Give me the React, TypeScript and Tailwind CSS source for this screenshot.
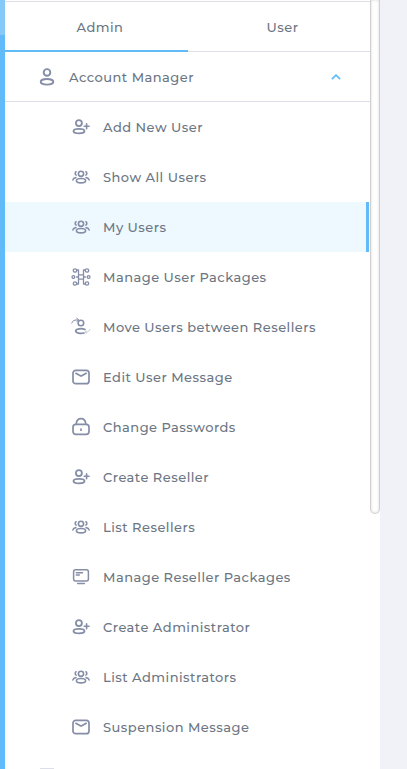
import React from "react";

type IconName = "user" | "add" | "group" | "packages" | "move" | "mail" | "lock" | "board";

const paths: Record<IconName, React.ReactNode> = {
  user: (
    <g strokeWidth="1.9">
      <circle cx="10" cy="5.4" r="3.3" />
      <ellipse cx="10" cy="14.8" rx="6.3" ry="2.8" />
    </g>
  ),
  add: (
    <g strokeWidth="1.8">
      <circle cx="8.9" cy="6.1" r="3" />
      <ellipse cx="9" cy="14.1" rx="5.5" ry="2.3" />
      <path d="M14.2 9.3h4.8M16.6 6.9v4.8" strokeWidth="1.6" />
    </g>
  ),
  group: (
    <g strokeWidth="1.6">
      <circle cx="11" cy="6.8" r="2.6" />
      <ellipse cx="11" cy="13.7" rx="4.6" ry="2.2" />
      <path d="M6.1 4.8C4.9 5.1 4.9 7.7 6.1 8.1M15.9 4.8c1.2.3 1.2 2.9 0 3.3M5.9 10.6c-1.6.2-2.7 1-3 2.3M16.1 10.6c1.6.2 2.7 1 3 2.3" />
    </g>
  ),
  packages: (
    <g strokeWidth="1.3">
      <circle cx="5" cy="3.5" r="1.7" />
      <circle cx="17" cy="3.5" r="1.7" />
      <circle cx="3.4" cy="10" r="1.4" />
      <circle cx="18.6" cy="10" r="1.4" />
      <circle cx="5" cy="16.5" r="1.7" />
      <circle cx="17" cy="16.5" r="1.7" />
      <path d="M6.8 3h1.7v14H6.8M15.2 3h-1.7v14h1.7M8.5 7.8h5M8.5 12.2h5M6.6 10h1.9M13.5 10h1.9" />
    </g>
  ),
  move: (
    <g strokeWidth="1.4">
      <ellipse cx="10.9" cy="6" rx="2.8" ry="2.8" strokeWidth="1.6" />
      <path d="M15 12.5c-3.5-1.6-9.3-.7-9.3 1.6 0 2.2 5 2.7 8.4 1.9" strokeWidth="1.7" />
      <path d="M1.8 6C2.4 3.6 4.6 2.5 8.5 3M6.8 1l1.7 2-1.6 1.3" strokeWidth="1" />
      <path d="M15.8 15h.8c1.6 0 2.8-1.1 3.2-2.5M16.2 14l-.7 1 1 1.3" strokeWidth="1" opacity=".45" />
    </g>
  ),
  mail: (
    <g strokeWidth="1.7">
      <rect x="3" y="3.3" width="16" height="13.4" rx="2.8" />
      <path d="m5.9 6.3 4 2.2c.8.5 1.5.5 2.3 0l4-2.2" />
    </g>
  ),
  lock: (
    <g strokeWidth="1.7">
      <rect x="3" y="7.4" width="16" height="10" rx="2.8" />
      <path d="M6.3 7.2v-.8c.7-6.4 8.7-6.4 9.4 0v.8M11 12v1.2" />
    </g>
  ),
  board: (
    <g strokeWidth="1.5">
      <rect x="3.6" y="2.8" width="14.8" height="11.2" rx="2" />
      <path d="M6.3 5.7h6.2M6.3 8h3M7.6 16.6h6.8" />
    </g>
  ),
};

function Icon({ name, className = "" }: { name: IconName; className?: string }) {
  return (
    <svg
      viewBox={name === "user" ? "0 0 20 20" : "0 0 22 20"}
      fill="none"
      stroke="#858ea6"
      strokeLinecap="round"
      strokeLinejoin="round"
      className={`shrink-0 ${className}`}
    >
      {paths[name]}
    </svg>
  );
}

const items: { label: string; icon: IconName; active?: boolean }[] = [
  { label: "Add New User", icon: "add" },
  { label: "Show All Users", icon: "group" },
  { label: "My Users", icon: "group", active: true },
  { label: "Manage User Packages", icon: "packages" },
  { label: "Move Users between Resellers", icon: "move" },
  { label: "Edit User Message", icon: "mail" },
  { label: "Change Passwords", icon: "lock" },
  { label: "Create Reseller", icon: "add" },
  { label: "List Resellers", icon: "group" },
  { label: "Manage Reseller Packages", icon: "board" },
  { label: "Create Administrator", icon: "add" },
  { label: "List Administrators", icon: "group" },
  { label: "Suspension Message", icon: "mail" },
];

export default function App() {
  return (
    <div className="flex h-[769px] w-[407px] overflow-hidden bg-[#f0f2f7] font-[Montserrat,Inter,sans-serif] text-[13px] font-medium tracking-[0.47px] text-[#6c7683]">
      <div className="flex w-[5px] shrink-0 flex-col bg-[#60bbf8]">
        <div className="h-[35px] bg-[#84c9f7]" />
      </div>
      <aside className="flex w-[365px] shrink-0 flex-col bg-white">
        <div className="mt-px flex h-[51px] shrink-0 border-t border-[#dcdfe7]">
          <button className="w-[183px] border-b-2 border-[#60bbf8] pl-[7px] pt-[3px] tracking-[0.47px]">Admin</button>
          <button className="flex-1 border-b border-[#dcdfe7] pl-[7px] pt-[2px] tracking-[0.47px]">User</button>
        </div>
        <div className="flex h-[50px] shrink-0 items-center border-b border-[#dcdfe7] pl-8">
          <Icon name="user" className="size-5" />
          <span className="ml-3 pt-[2px]">Account Manager</span>
          <svg viewBox="0 0 12 8" fill="none" stroke="#60bbf8" strokeWidth="1.7" className="ml-auto mr-7 h-2 w-3">
            <path d="m1.8 6.2 4.2-4 4.2 4" />
          </svg>
        </div>
        <nav className="shrink-0">
          {items.map(({ label, icon, active }) => (
            <a
              key={label}
              className={`flex h-[50px] items-center pl-[65px] ${active ? "mr-px border-r-3 border-[#60bbf8] bg-[#eef8ff]" : ""}`}
            >
              <Icon name={icon} className="h-5 w-[22px]" />
              <span className="ml-[11px] whitespace-nowrap pt-[2px]">{label}</span>
            </a>
          ))}
        </nav>
        <div className="ml-[35px] mt-4 h-px w-[14px] shrink-0 bg-[#dcdfe7]" />
      </aside>
      <div className="w-[10px] shrink-0 bg-white">
        <div className="h-[514px] rounded-b-[5px] border border-t-0 border-[#d0d0d0] bg-white shadow-[inset_0_0_3px_#d6d6d6]" />
      </div>
    </div>
  );
}
